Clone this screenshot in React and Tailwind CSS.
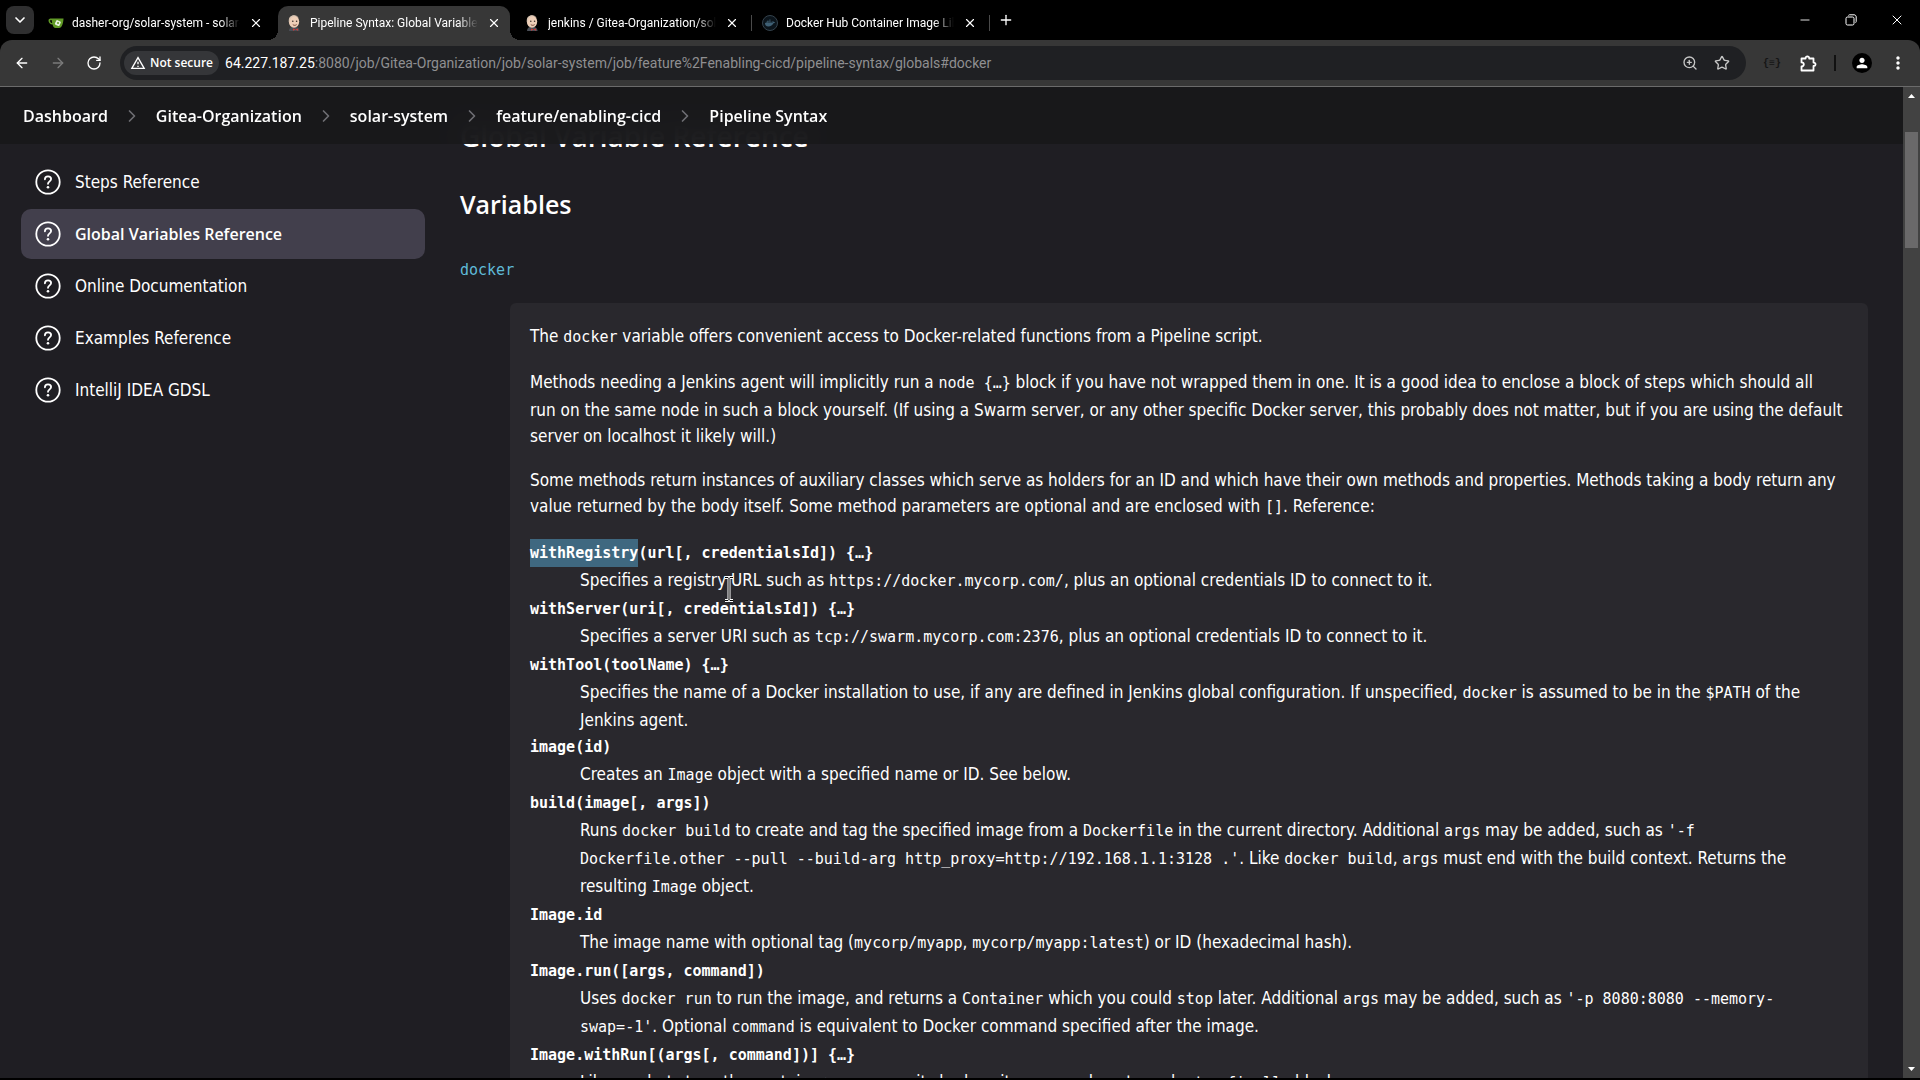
import React from 'react';
import {
  ArrowLeft,
  ArrowRight,
  ChevronDown,
  ChevronRight,
  Minus,
  Plus,
  RotateCw,
  Star,
  X,
  ZoomIn,
} from 'lucide-react';
import { MdPerson, MdMoreVert, MdOutlineWarningAmber } from 'react-icons/md';
import { FaDocker } from 'react-icons/fa';

const GiteaIcon = () => (
  <svg viewBox="0 0 16 16" className="h-4 w-4 shrink-0" aria-hidden="true">
    <path d="M3.5 3.5H15.5C15.3 8 14 13 11 13H7.5C6 13 5 11.5 4.6 9.5C2 9.5 0.5 7.5 0.5 5.5C0.5 4 1.6 3.5 3.5 3.5Z" fill="#609926" />
    <path d="M3.6 5C2.4 4.9 2 5.4 2.1 6.2C2.3 7.3 3.2 8 4.2 8.1Z" fill="#000" />
    <rect x="7.4" y="5.6" width="5" height="5" rx="1" transform="rotate(25 10 8)" fill="#e6f2dc" />
    <circle cx="10" cy="8" r="1" fill="#609926" />
  </svg>
);

const JenkinsIcon = () => (
  <svg viewBox="0 0 16 16" className="h-4 w-4 shrink-0" aria-hidden="true">
    <path d="M3 16C3 13 5 11.5 8 11.5C11 11.5 13.5 13 13.5 16Z" fill="#4b4f57" />
    <ellipse cx="8" cy="6.6" rx="5.2" ry="6.2" fill="#eecfb8" />
    <path d="M2.8 6C2.6 2.5 5 0.2 8 0.3C10 0.3 11.4 1 12 2C9 1 5.8 1.6 4.6 3.4C4 4.5 4 6 3.6 7.5Z" fill="#d8c4b2" />
    <circle cx="6.8" cy="6.2" r="0.8" fill="#3b2f2a" />
    <circle cx="10.6" cy="6.2" r="0.8" fill="#3b2f2a" />
    <path d="M6.8 9.6C8 10.6 9.6 10.5 10.6 9.6" stroke="#7c4a3a" fill="none" />
    <path d="M7 13.6L9.5 14.6L7 15.8ZM12 13.6L9.5 14.6L12 15.8Z" fill="#d33833" />
  </svg>
);

const DockerIcon = () => (
  <span className="flex h-4 w-4 shrink-0 items-center justify-center rounded-full border border-[#34424c] bg-[#0b141b]">
    <FaDocker className="h-2.5 w-2.5 text-[#3f6075]" />
  </span>
);

const HelpIcon = () => (
  <svg viewBox="0 0 26 26" className="h-[26px] w-[26px] shrink-0" fill="none" stroke="currentColor" strokeLinecap="round" aria-hidden="true">
    <circle cx="13" cy="13" r="11.7" strokeWidth="1.8" />
    <path d="M9.9 10.3C9.9 8.5 11.2 7.4 13 7.4C14.8 7.4 16.1 8.5 16.1 10.1C16.1 12.2 13 12.5 13 14.8" strokeWidth="1.8" strokeLinejoin="round" />
    <circle cx="13" cy="18.2" r="1.3" fill="currentColor" stroke="none" />
  </svg>
);

const PuzzleIcon = () => (
  <svg viewBox="0 0 17 17" className="h-[17px] w-[17px]" fill="none" stroke="currentColor" strokeWidth="1.8" strokeLinejoin="round" aria-hidden="true">
    <path d="M1.5 3.5H5.6C5.4 0.8 9.4 0.8 9.2 3.5H13.5V7.6C16.2 7.4 16.2 11.2 13.5 11V15.5H1.5V11.4C4.6 11.4 4.6 7.4 1.5 7.4Z" />
  </svg>
);

const TextCursor = () => (
  <svg viewBox="0 0 10 26" className="absolute top-1.5 -left-0.5 h-[26px] w-2.5" fill="none" aria-hidden="true">
    <path d="M1 1.5H4L5 2.5L6 1.5H9M5 2.5V23.5M1 24.5H4L5 23.5L6 24.5H9" stroke="#fff" strokeWidth="3" />
    <path d="M1 1.5H4L5 2.5L6 1.5H9M5 2.5V23.5M1 24.5H4L5 23.5L6 24.5H9" stroke="#000" />
  </svg>
);

const tabs = [
  { title: 'dasher-org/solar-system - solar-system', Icon: GiteaIcon },
  { title: 'Pipeline Syntax: Global Variable Reference', Icon: JenkinsIcon, active: true },
  { title: 'jenkins / Gitea-Organization/solar-system', Icon: JenkinsIcon, divider: true },
  { title: 'Docker Hub Container Image Library', Icon: DockerIcon, divider: true },
];

const crumbs = ['Dashboard', 'Gitea-Organization', 'solar-system', 'feature/enabling-cicd', 'Pipeline Syntax'];

const links = [
  { label: 'Steps Reference' },
  { label: 'Global Variables Reference', active: true },
  { label: 'Online Documentation' },
  { label: 'Examples Reference' },
  { label: 'IntelliJ IDEA GDSL' },
];

const Code = ({ children }) => (
  <code className="font-['DejaVu_Sans_Mono',monospace] text-[15px] leading-7">{children}</code>
);

const methods = [
  {
    name: <><span className="inline-block bg-[#3f6880]">withRegistry</span>(url[, credentialsId]) {'{…}'}</>,
    text: <>Specifies a registry<span className="relative"><TextCursor /></span> URL such as <Code>https://docker.mycorp.com/</Code>, plus an optional credentials ID to connect to it.</>,
  },
  {
    name: 'withServer(uri[, credentialsId]) {…}',
    text: <>Specifies a server URI such as <Code>tcp://swarm.mycorp.com:2376</Code>, plus an optional credentials ID to connect to it.</>,
  },
  {
    name: 'withTool(toolName) {…}',
    text: <>Specifies the name of a Docker installation to use, if any are defined in Jenkins global configuration. If unspecified, <Code>docker</Code> is assumed to be in the <Code>$PATH</Code> of the Jenkins agent.</>,
  },
  {
    name: 'image(id)',
    text: <>Creates an <Code>Image</Code> object with a specified name or ID. See below.</>,
  },
  {
    name: 'build(image[, args])',
    text: <>Runs <Code>docker build</Code> to create and tag the specified image from a <Code>Dockerfile</Code> in the current directory. Additional <Code>args</Code> may be added, such as <Code>'-f Dockerfile.other --pull --build-arg http_proxy=http://192.168.1.1:3128 .'</Code>. Like <Code>docker build</Code>, <Code>args</Code> must end with the build context. Returns the resulting <Code>Image</Code> object.</>,
  },
  {
    name: 'Image.id',
    text: <>The image name with optional tag (<Code>mycorp/myapp</Code>, <Code>mycorp/myapp:latest</Code>) or ID (hexadecimal hash).</>,
  },
  {
    name: 'Image.run([args, command])',
    text: <>Uses <Code>docker run</Code> to run the image, and returns a <Code>Container</Code> which you could <Code>stop</Code> later. Additional <Code>args</Code> may be added, such as <Code>'-p 8080:8080 --memory-swap=-1'</Code>. Optional <Code>command</Code> is equivalent to Docker command specified after the image.</>,
  },
  {
    name: 'Image.withRun[(args[, command])] {…}',
    text: <>Like <Code>run</Code> but stops the container as soon as its body exits, so you do not need a <Code>try</Code>-<Code>finally</Code> block.</>,
  },
];

const Tab = ({ title, Icon, active, divider }) => (
  <div className="flex h-[34px] items-center">
    <div
      className={
        active
          ? 'relative flex h-full w-[232px] items-center gap-2 rounded-t-[10px] bg-[#373737] px-2'
          : 'flex h-full w-[232px] items-center gap-2 px-2'
      }
    >
      {active && (
        <>
          <span className="absolute bottom-0 -left-2.5 h-2.5 w-2.5 bg-[radial-gradient(circle_at_0_0,transparent_10px,#373737_10px)]" />
          <span className="absolute -right-2.5 bottom-0 h-2.5 w-2.5 bg-[radial-gradient(circle_at_100%_0,transparent_10px,#373737_10px)]" />
        </>
      )}
      <Icon />
      <span className="flex-1 overflow-hidden text-xs whitespace-nowrap [mask-image:linear-gradient(to_right,black_88%,transparent)]">
        {title}
      </span>
      <button className="flex h-4 w-4 items-center justify-center" aria-label="Close tab">
        <X className="h-3.5 w-3.5" />
      </button>
    </div>
    <span className="flex h-4 w-1.5 justify-center">
      {divider && <span className="w-px bg-[#4a4a4a]" />}
    </span>
  </div>
);

const TabStrip = () => (
  <div className="flex h-10 shrink-0 items-end font-['Roboto',sans-serif]">
    <button className="mr-1.5 mb-1.5 ml-1.5 flex h-7 w-7 items-center justify-center rounded-lg bg-[#2f2f30]" aria-label="Search tabs">
      <ChevronDown className="h-4 w-4" strokeWidth={2.5} />
    </button>
    {tabs.map((tab) => (
      <Tab key={tab.title} {...tab} />
    ))}
    <button className="mb-3 ml-1.5" aria-label="New tab">
      <Plus className="h-4 w-4" />
    </button>
    <div className="ml-auto flex h-full">
      <button className="flex w-[46px] items-center justify-center" aria-label="Minimize">
        <Minus className="h-3.5 w-3.5" strokeWidth={1.5} />
      </button>
      <button className="flex w-[46px] items-center justify-center" aria-label="Restore">
        <svg viewBox="0 0 12 12" className="h-3 w-3" fill="none" stroke="currentColor" aria-hidden="true">
          <rect x="1" y="3" width="8" height="8" rx="1.5" />
          <path d="M3.5 1.5C3.5 1 4 0.8 4.5 0.8H9C10.3 0.8 11.2 1.7 11.2 3V7.5C11.2 8.2 11 8.5 10.5 8.5" />
        </svg>
      </button>
      <button className="flex w-[46px] items-center justify-center" aria-label="Close">
        <X className="h-4 w-4" strokeWidth={1.5} />
      </button>
    </div>
  </div>
);

const Toolbar = () => (
  <div className="flex h-[47px] shrink-0 items-center rounded-t-xl border-b border-[#6b6b6b] bg-[#373737] px-2">
    <div className="flex gap-2">
      <button className="flex h-7 w-7 items-center justify-center" aria-label="Back">
        <ArrowLeft className="h-4 w-4" />
      </button>
      <button className="flex h-7 w-7 items-center justify-center text-[#7b7b7b]" aria-label="Forward">
        <ArrowRight className="h-4 w-4" />
      </button>
      <button className="flex h-7 w-7 items-center justify-center" aria-label="Reload">
        <RotateCw className="h-4 w-4" />
      </button>
    </div>
    <div className="mx-3 flex h-[34px] min-w-0 flex-1 items-center rounded-full bg-[#1f2023] pr-4 pl-1 text-[#c7c7c7]">
      <span className="flex h-6 items-center gap-1 rounded-full bg-[#353639] px-1.5 font-['Open_Sans',sans-serif] text-xs font-semibold whitespace-nowrap text-white">
        <MdOutlineWarningAmber className="h-4 w-4" />
        Not secure
      </span>
      <span className="ml-1.5 flex-1 truncate font-['Roboto',sans-serif] text-sm text-[#8f8f91]">
        <span className="text-white">64.227.187.25</span>:8080/job/Gitea-Organization/job/solar-system/job/feature%2Fenabling-cicd/pipeline-syntax/globals#docker
      </span>
      <button className="mr-4" aria-label="Zoom">
        <ZoomIn className="h-4 w-4" />
      </button>
      <button aria-label="Bookmark">
        <Star className="h-4 w-4" />
      </button>
    </div>
    <button className="mr-2 h-7 w-7 font-['Liberation_Mono',monospace] text-[10px] font-bold text-[#151515]" aria-label="JSON viewer">
      {'{≡}'}
    </button>
    <button className="flex h-7 w-7 items-center justify-center" aria-label="Extensions">
      <PuzzleIcon />
    </button>
    <span className="mx-3 h-4 w-0.5 bg-[#111]" />
    <button className="mx-1 flex h-5 w-5 items-center justify-center rounded-full bg-black" aria-label="Profile">
      <MdPerson className="h-4 w-4" />
    </button>
    <button className="ml-2 flex h-7 w-7 items-center justify-center" aria-label="Menu">
      <MdMoreVert className="h-5 w-5" />
    </button>
  </div>
);

const Scrollbar = () => (
  <div className="flex w-[17px] shrink-0 flex-col items-center bg-[#424242] py-[7px]">
    <svg viewBox="0 0 7 4" className="h-1 w-[7px]" fill="#fff" aria-hidden="true">
      <path d="M0 4L3.5 0L7 4Z" />
    </svg>
    <div className="mt-[34px] h-[116px] w-[13px] bg-[#6a696a]" />
    <svg viewBox="0 0 7 4" className="mt-auto h-1 w-[7px]" fill="#fff" aria-hidden="true">
      <path d="M0 0L3.5 4L7 0Z" />
    </svg>
  </div>
);

const App = () => {
  return (
    <div className="flex h-screen flex-col overflow-hidden bg-black pb-0.5 text-white">
      <TabStrip />
      <Toolbar />

      <div className="flex min-h-0 flex-1">
        <div className="min-w-0 flex-1 overflow-hidden bg-[#1f1e23] font-['DejaVu_Sans_Condensed','Open_Sans',sans-serif] text-[17px] leading-[26px]">
          <nav className="sticky top-0 z-10 flex h-[57px] items-center gap-3.5 bg-[#18181a]/95 px-[23px] font-['Open_Sans',sans-serif] text-base font-semibold backdrop-blur-md" aria-label="Breadcrumb">
            {crumbs.map((crumb, i) => (
              <React.Fragment key={crumb}>
                {i > 0 && <ChevronRight className="h-5 w-5 text-[#6f6f74]" />}
                <a href="#">{crumb}</a>
              </React.Fragment>
            ))}
          </nav>

          <div className="flex">
            <aside className="w-[460px] shrink-0 pt-[13px] pr-[35px] pl-[21px]">
              <ul className="flex flex-col gap-0.5">
                {links.map(({ label, active }) => (
                  <li key={label}>
                    <a
                      href="#"
                      className={
                        active
                          ? "flex h-[50px] items-center gap-3.5 rounded-[10px] bg-[#423f4c] px-3.5 font-['Open_Sans',sans-serif] text-base font-semibold"
                          : 'flex h-[50px] items-center gap-3.5 px-3.5'
                      }
                    >
                      <HelpIcon />
                      {label}
                    </a>
                  </li>
                ))}
              </ul>
            </aside>

            <main className="min-w-0 flex-1 pr-[35px]">
              <h1 className="-mt-6 font-['Open_Sans',sans-serif] text-[28px] leading-8 font-semibold">Global Variable Reference</h1>
              <h2 className="mt-9 font-['Open_Sans',sans-serif] text-[25px] leading-8 font-semibold">Variables</h2>
              <a href="#docker" className="mt-[38px] block font-['DejaVu_Sans_Mono',monospace] text-[15px] leading-6 text-[#5fbbd8]">
                docker
              </a>
              <div className="mt-[21px] ml-[50px] rounded-md bg-[#29282d] p-5">
                <p className="mb-[18px]">The <Code>docker</Code> variable offers convenient access to Docker-related functions from a Pipeline script.</p>
                <p className="mb-[18px]">
                  Methods needing a Jenkins agent will implicitly run a <Code>node {'{…}'}</Code> block if you have not wrapped them in one. It is a good idea to enclose a block of steps which should all
                  <br />
                  run on the same node in such a block yourself. (If using a Swarm server, or any other specific Docker server, this probably does not matter, but if you are using the default server on localhost it likely will.)
                </p>
                <p className="mb-[18px]">Some methods return instances of auxiliary classes which serve as holders for an ID and which have their own methods and properties. Methods taking a body return any value returned by the body itself. Some method parameters are optional and are enclosed with <Code>[]</Code>. Reference:</p>
                <dl>
                  {methods.map(({ name, text }, i) => (
                    <React.Fragment key={i}>
                      <dt className="font-['DejaVu_Sans_Mono',monospace] text-[15px] leading-7 font-bold">{name}</dt>
                      <dd className="ml-[50px]">{text}</dd>
                    </React.Fragment>
                  ))}
                </dl>
              </div>
            </main>
          </div>
        </div>
        <Scrollbar />
      </div>
    </div>
  );
};

export default App;
